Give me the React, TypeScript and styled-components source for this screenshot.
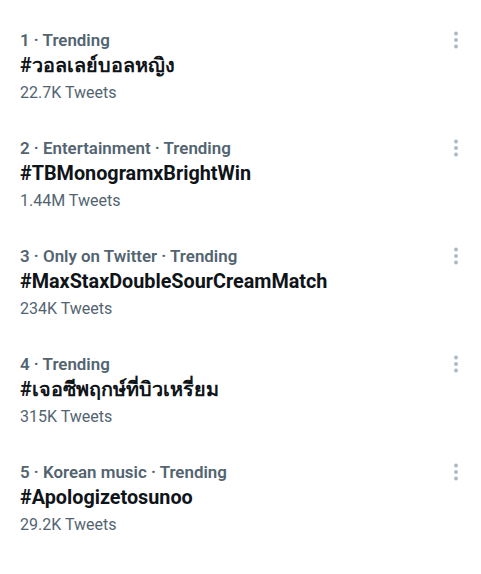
import React from "react";
import styled, { createGlobalStyle } from "styled-components";

const Global = createGlobalStyle`
  html, body { margin: 0; padding: 0; background: #ffffff; }
  body { font-family: Roboto, "Noto Sans", "DejaVu Sans", sans-serif; -webkit-font-smoothing: antialiased; }
`;

const List = styled.div`
  display: flex;
  flex-direction: column;
  padding-top: 12px;
  width: 481px;
`;

const Item = styled.div`
  display: flex;
  align-items: flex-start;
  justify-content: space-between;
  padding: 18px 15px 18px 20px;
  height: 108px;
  box-sizing: border-box;
`;

const Body = styled.div`
  display: flex;
  flex-direction: column;
`;

const Meta = styled.div`
  font-size: 16.9px;
  line-height: 20px;
  font-weight: 600;
  color: #536471;
`;

const Title = styled.div`
  margin-top: 4px;
  font-size: 19.8px;
  line-height: 24px;
  font-weight: 700;
  color: #0f1419;
`;

const Count = styled.div`
  margin-top: 5px;
  font-size: 16px;
  line-height: 20px;
  font-weight: 400;
  color: #536471;
`;

const More = styled.div`
  width: 20px;
  height: 20px;
  display: flex;
  align-items: center;
  justify-content: center;
  color: #b0bac2;
`;

const Dots = () => (
  <svg width="20" height="20" viewBox="0 0 20 20" fill="currentColor">
    <circle cx="10" cy="3.5" r="2" />
    <circle cx="10" cy="10" r="2" />
    <circle cx="10" cy="16.5" r="2" />
  </svg>
);

const trends = [
  { meta: "1 · Trending", title: "#วอลเลย์บอลหญิง", count: "22.7K Tweets" },
  { meta: "2 · Entertainment · Trending", title: "#TBMonogramxBrightWin", count: "1.44M Tweets" },
  { meta: "3 · Only on Twitter · Trending", title: "#MaxStaxDoubleSourCreamMatch", count: "234K Tweets" },
  { meta: "4 · Trending", title: "#เจอซีพฤกษ์ที่บิวเหรี่ยม", count: "315K Tweets" },
  { meta: "5 · Korean music · Trending", title: "#Apologizetosunoo", count: "29.2K Tweets" },
];

export default function App() {
  return (
    <>
      <Global />
      <List>
        {trends.map((t) => (
          <Item key={t.title}>
            <Body>
              <Meta>{t.meta}</Meta>
              <Title>{t.title}</Title>
              <Count>{t.count}</Count>
            </Body>
            <More>
              <Dots />
            </More>
          </Item>
        ))}
      </List>
    </>
  );
}
